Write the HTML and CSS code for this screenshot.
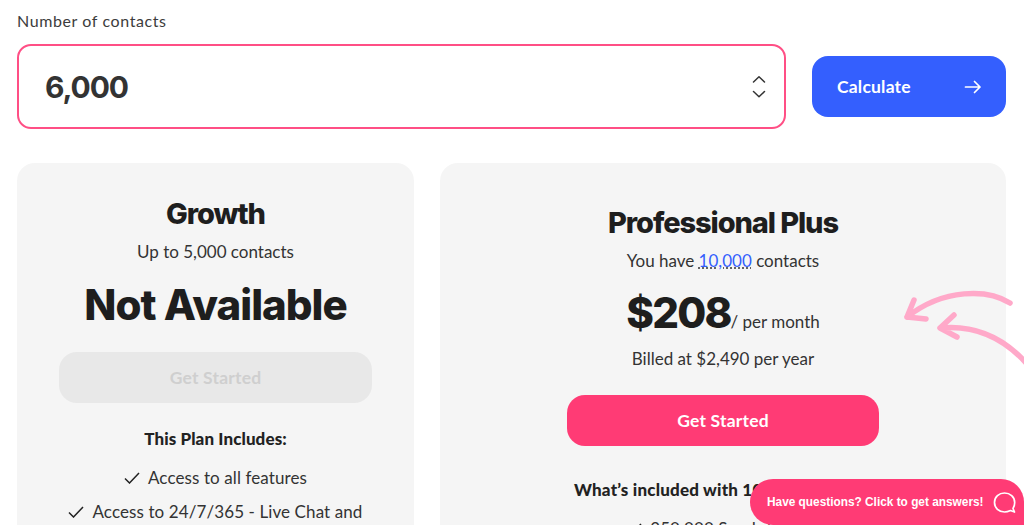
FILE: index.html
```html
<!DOCTYPE html>
<html lang="en">
<head>
<meta charset="utf-8">
<title>Pricing calculator</title>
<link rel="stylesheet" href="styles.css">
</head>
<body>
<main class="page">
  <div class="form">
    <div class="field">
      <label class="label">Number of contacts</label>
      <div class="input">
        <span class="value">6,000</span>
        <svg class="spinner" width="14" height="24" viewBox="0 0 14 24" fill="none" stroke="#333" stroke-width="1.5" stroke-linecap="round" stroke-linejoin="round"><path d="M1.5 7 7 1.8 12.5 7"/><path d="M1.5 16.5 7 21.7 12.5 16.5"/></svg>
      </div>
    </div>
    <button class="calc"><span>Calculate</span>
      <svg width="18" height="14" viewBox="0 0 18 14" fill="none" stroke="#fff" stroke-width="1.7" stroke-linecap="round" stroke-linejoin="round"><path d="M1.5 7H16M10.5 1.5 16 7l-5.500 5.500"/></svg>
    </button>
  </div>
  <div class="plans">
    <section class="card card-left">
      <h2 class="title">Growth</h2>
      <p class="sub">Up to 5,000 contacts</p>
      <p class="na">Not Available</p>
      <div class="btn btn-off">Get Started</div>
      <h3 class="inc">This Plan Includes:</h3>
      <ul class="feat">
        <li><svg class="check" width="16" height="12" viewBox="0 0 16 12" fill="none" stroke="#222" stroke-width="1.5"><path d="M1 6.500 5.500 11 15 1"/></svg>Access to all features</li>
        <li><svg class="check" width="16" height="12" viewBox="0 0 16 12" fill="none" stroke="#222" stroke-width="1.5"><path d="M1 6.500 5.500 11 15 1"/></svg>Access to 24/7/365 - Live Chat and</li>
      </ul>
    </section>
    <section class="card card-right">
      <h2 class="title">Professional Plus</h2>
      <p class="sub">You have <span class="link">10,000</span> contacts</p>
      <p class="price"><span class="amt">$208</span><span class="per">/ per month</span></p>
      <p class="billed">Billed at $2,490 per year</p>
      <div class="btn btn-on">Get Started</div>
      <h3 class="inc inc-r">What’s included with 10,000 contacts</h3>
      <ul class="feat"><li><svg class="check" width="16" height="12" viewBox="0 0 16 12" fill="none" stroke="#222" stroke-width="1.5"><path d="M1 6.500 5.500 11 15 1"/></svg>250,000 Sends/month</li></ul>
      <svg class="arrows" width="130" height="85" viewBox="0 0 130 85" fill="none" stroke="#ffa9c9" stroke-width="5.500" stroke-linecap="round" stroke-linejoin="round"><path d="M110 18C88 4 44 3 7 32M14 15 7 32 26 34"/><path d="M40 43C70 40 100 48 128 80M54 30 40 43 57 52"/></svg>
    </section>
  </div>
</main>
<div class="chat"><span>Have questions? Click to get answers!</span>
  <svg width="23" height="23" viewBox="0 0 23 23" fill="none" stroke="#fff" stroke-width="1.700"><path d="M20 17.500C21 16 21.700 14 21.700 11.500 21.700 6 17 2 11.500 2 6 2 1.500 6 1.500 11.500S6 21 11.500 21C14 21 16 20.200 17.500 19.500L21.500 21Z" stroke-linejoin="round"/></svg>
</div>
</body>
</html>
```
FILE: styles.css
```css
html, body { margin: 0; height: 525px; overflow: hidden; background: #fff; }
body { font-family: "Lato", "Liberation Sans", sans-serif; color: #222; position: relative; }
.page { padding: 12px 18px 0 17px; }
.form { display: flex; align-items: flex-end; gap: 26px; }
.field { flex: 0 0 769px; }
.label { display: block; font-size: 16px; line-height: 18px; color: #3c3c3c; letter-spacing: .6px; margin-bottom: 14px; }
.input { box-sizing: border-box; height: 85px; border: 2px solid #ff4f85; border-radius: 14px; display: flex; align-items: center; justify-content: space-between; padding: 0 18px 0 26px; }
.value { font: 700 30px "Inter", sans-serif; color: #333; letter-spacing: -1.100px; }
.calc { box-sizing: border-box; flex: 0 0 194px; height: 61px; margin-bottom: 12px; border: 0; border-radius: 16px; background: #345ffe; color: #fff; font: 700 17.500px "Lato", sans-serif; letter-spacing: .2px; display: flex; align-items: center; justify-content: space-between; padding: 0 24px 0 25px; }
.plans { display: flex; gap: 26px; margin-top: 34px; align-items: flex-start; }
.card { box-sizing: border-box; background: #f5f5f5; border-radius: 18px; height: 420px; text-align: center; position: relative; }
.card-left { flex: 0 0 397px; padding: 33px 42px 0; }
.card-right { flex: 0 0 566px; padding: 42px 127px 0; }
.title { margin: 0; font: 800 29px/36px "Inter", sans-serif; color: #1e1e1e; letter-spacing: -1.100px; }
.sub { margin: 10px 0 0; font-size: 17px; line-height: 20px; color: #333; }
.link { color: #345ffe; text-decoration: underline dotted #333; }
.na { margin: 17px 0 0; font: 800 42px/52px "Inter", sans-serif; color: #1e1e1e; letter-spacing: -1px; }
.btn { height: 51px; border-radius: 18px; display: flex; align-items: center; justify-content: center; font-size: 17.500px; font-weight: 700; letter-spacing: .2px; }
.btn-off { margin-top: 21px; background: #e8e8e8; color: #cfcfcf; }
.btn-on { margin-top: 26px; background: #ff3b75; color: #fff; }
.inc { margin: 26px 0 0; font-size: 17px; line-height: 20px; font-weight: 900; color: #222; white-space: nowrap; letter-spacing: .1px; }
.inc-r { margin-top: 34px; letter-spacing: .2px; text-align: left; margin-left: 7px; }
.feat { list-style: none; margin: 19px -20px 0; padding: 0; font-size: 17px; line-height: 20px; color: #333; letter-spacing: .1px; }
.feat li { margin-bottom: 14px; white-space: nowrap; }
.check { margin-right: 8px; }
.price { margin: 16px 0 0; display: flex; align-items: baseline; justify-content: center; }
.amt { font: 800 42px/52px "Inter", sans-serif; letter-spacing: -1.800px; color: #1e1e1e; }
.per { font-size: 17px; color: #333; }
.billed { margin: 10px 0 0; font-size: 17px; line-height: 20px; color: #333; }
.arrows { position: absolute; left: 460px; top: 122px; }
.chat { position: absolute; left: 750px; top: 479px; width: 274px; height: 46px; box-sizing: border-box; padding: 0 0 0 17px; border-radius: 24px 24px 0 24px; background: #ff3b75; color: #fff; display: flex; align-items: center; gap: 9px; font: 700 11.850px "Liberation Sans", sans-serif; }
```
